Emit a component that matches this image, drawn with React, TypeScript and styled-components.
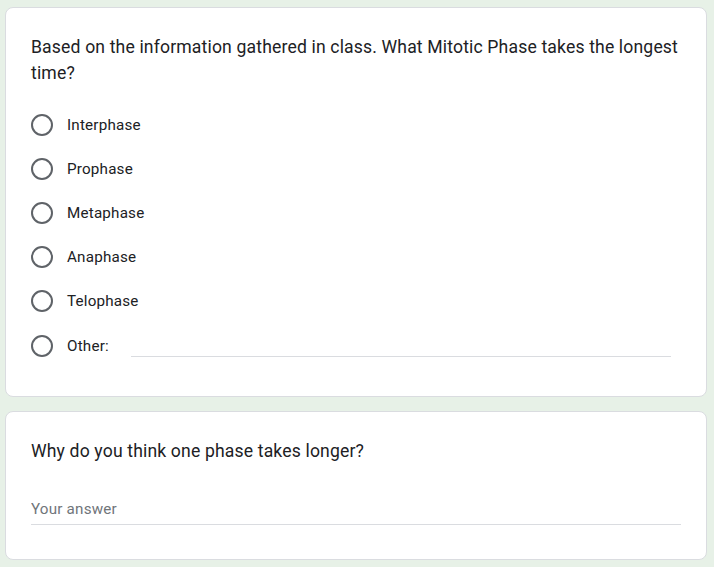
import styled, { createGlobalStyle } from "styled-components"

const GlobalStyle = createGlobalStyle`
  html, body {
    margin: 0;
    padding: 0;
    background: #e7f1e7;
  }
  * { box-sizing: border-box; }
`

const options = ["Interphase", "Prophase", "Metaphase", "Anaphase", "Telophase"]

export default function App() {
  return (
    <>
      <GlobalStyle />
      <Page>
        <Card $bottom={27}>
          <Question>
            Based on the information gathered in class. What Mitotic Phase takes the longest time?
          </Question>
          <Options>
            {options.map((o) => (
              <OptionRow key={o}>
                <Radio />
                <Label>{o}</Label>
              </OptionRow>
            ))}
            <OptionRow $tall>
              <Radio />
              <Label>Other:</Label>
              <OtherInput />
            </OptionRow>
          </Options>
        </Card>
        <Card $bottom={34}>
          <Question>Why do you think one phase takes longer?</Question>
          <AnswerInput placeholder="Your answer" />
        </Card>
      </Page>
    </>
  )
}

const Page = styled.div`
  display: flex;
  flex-direction: column;
  gap: 14px;
  padding: 7px 7px 0 5px;
`
const Card = styled.section<{ $bottom?: number }>`
  background: #fff;
  border: 1px solid #dadce0;
  border-radius: 8px;
  padding: 26px 25px ${(p) => p.$bottom ?? 26}px 25px;
`
const Question = styled.div`
  font-family: Roboto, "Noto Sans", sans-serif;
  font-size: 17.6px;
  line-height: 26px;
  letter-spacing: 0.15px;
  color: #202124;
`
const Options = styled.div`
  margin-top: 17px;
  display: flex;
  flex-direction: column;
`
const OptionRow = styled.label<{ $tall?: boolean }>`
  display: flex;
  align-items: center;
  height: ${(p) => (p.$tall ? 46 : 44)}px;
`
const Radio = styled.span`
  width: 22px;
  height: 22px;
  border: 2px solid #5f6368;
  border-radius: 50%;
  flex-shrink: 0;
`
const Label = styled.span`
  margin-left: 14px;
  font-family: Roboto, "Noto Sans", sans-serif;
  font-size: 15.2px;
  letter-spacing: 0.2px;
  color: #202124;
`
const OtherInput = styled.input`
  flex: 1;
  margin: 0 10px 0 22px;
  height: 34px;
  padding: 0;
  border: none;
  border-bottom: 1px solid #dadce0;
  outline: none;
  background: transparent;
  transform: translateY(-6px);
`
const AnswerInput = styled.input`
  display: block;
  width: 100%;
  margin-top: 30px;
  height: 31px;
  padding: 0;
  border: none;
  border-bottom: 1px solid #dadce0;
  outline: none;
  font-family: Roboto, "Noto Sans", sans-serif;
  font-size: 15.2px;
  letter-spacing: 0.2px;
  color: #202124;
  &::placeholder { color: #70757a; }
`
